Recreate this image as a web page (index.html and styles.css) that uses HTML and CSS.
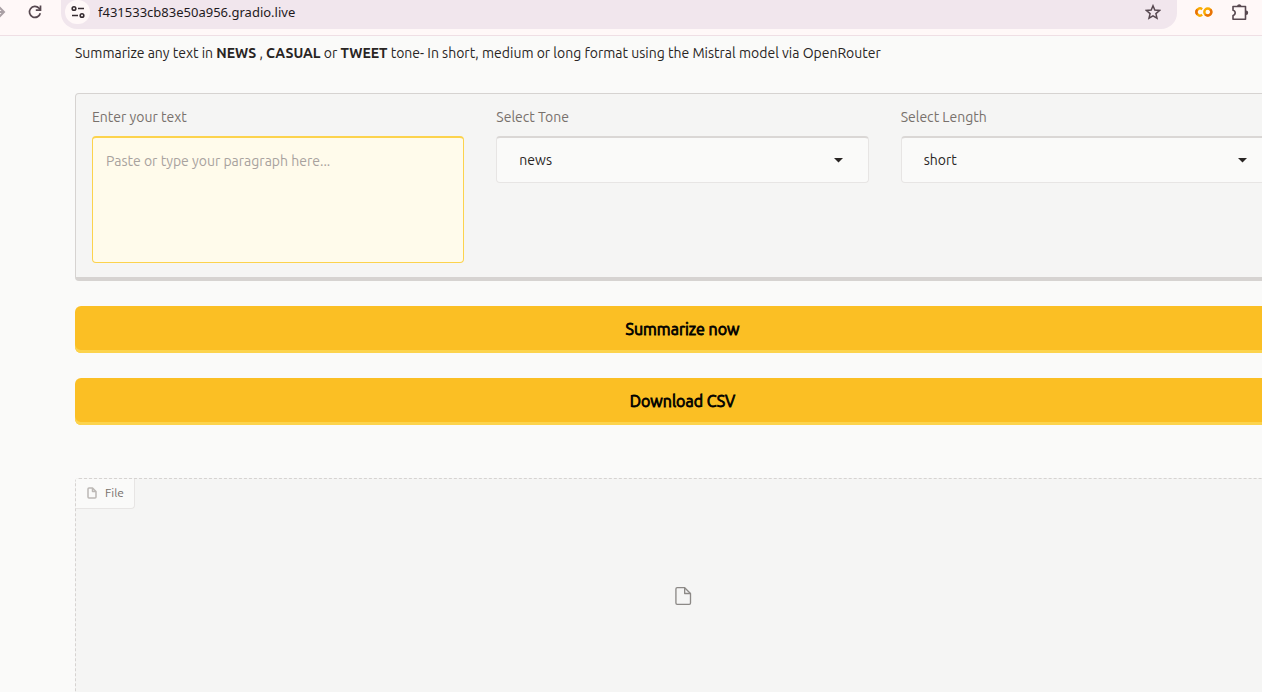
FILE: index.html
```html
<!DOCTYPE html>
<html lang="en">
<head>
<meta charset="utf-8">
<meta name="viewport" content="width=device-width, initial-scale=1">
<title>Text summarizer</title>
<link rel="stylesheet" href="styles.css">
</head>
<body>
<header class="toolbar">
  <button class="nav-button forward" aria-label="Forward">
    <svg width="16" height="16" viewBox="0 0 16 16" fill="none" stroke="currentColor" stroke-width="2"><path d="M1 8h13M8.500 2.500 14 8l-5.500 5.500"/></svg>
  </button>
  <button class="nav-button" aria-label="Reload">
    <svg width="16" height="16" viewBox="0 0 16 16" fill="none" stroke="currentColor" stroke-width="1.700"><path d="M13.300 9.200A5.500 5.500 0 1 1 12 4.200L13.500 5.700"/><path d="M13.500 1.500v4.700H8.800"/></svg>
  </button>
  <div class="address">
    <button class="site-info" aria-label="Site information">
      <svg width="14" height="14" viewBox="0 0 14 14" fill="none" stroke="currentColor" stroke-width="1.600"><circle cx="3" cy="3.500" r="1.800"/><path d="M7 3.500h6M1 10.500h6"/><circle cx="11" cy="10.500" r="1.800"/></svg>
    </button>
    <input class="url" type="text" aria-label="Address" value="f431533cb83e50a956.gradio.live">
    <button class="nav-button" aria-label="Bookmark">
      <svg width="16" height="16" viewBox="0 0 16 16" fill="none" stroke="currentColor" stroke-width="1.500"><path d="m8 1.800 1.800 4.300 4.700.400-3.600 3.100 1.100 4.600L8 11.800l-4 2.400 1.100-4.600L1.500 6.500l4.700-.400z"/></svg>
    </button>
  </div>
  <button class="nav-button" aria-label="Colab">
    <svg width="18" height="12" viewBox="0 0 18 12" fill="none" stroke-width="2.400"><path stroke="#f9ab00" d="M7.200 8.800A3.500 3.500 0 1 1 7.200 3.200"/><circle cx="12.800" cy="6" r="3.500" stroke="#f9ab00"/><path stroke="#e8710a" d="M15.300 3.500A3.500 3.500 0 0 1 10.300 8.500M2.300 8.500A3.500 3.500 0 0 1 2.300 3.500"/></svg>
  </button>
  <button class="nav-button" aria-label="Extensions">
    <svg width="18" height="18" viewBox="0 0 18 18" fill="none" stroke="currentColor" stroke-width="1.600" stroke-linejoin="round"><path d="M2 3.500h12.500v12.700H2v-3.700a2.700 2.700 0 0 0 0-5.300z"/><path fill="currentColor" stroke="none" d="M6 3a2.300 2.300 0 0 1 4.500 0zM15 7.500a2.200 2.200 0 0 1 0 4.400z"/></svg>
  </button>
</header>

<main class="app">
  <p class="intro">Summarize any text in <strong>NEWS</strong> , <strong>CASUAL</strong> or <strong>TWEET</strong> tone- In short, medium or long format using the Mistral model via OpenRouter</p>

  <section class="panel">
    <label class="field">
      <span class="field-label">Enter your text</span>
      <textarea class="text-box" placeholder="Paste or type your paragraph here..."></textarea>
    </label>
    <label class="field">
      <span class="field-label">Select Tone</span>
      <span class="select-wrap">
        <select class="select"><option>news</option><option>casual</option><option>tweet</option></select>
        <svg class="caret" width="18" height="18" viewBox="0 0 18 18"><path fill="currentColor" d="M5 7h9l-4.500 4.500z"/></svg>
      </span>
    </label>
    <label class="field">
      <span class="field-label">Select Length</span>
      <span class="select-wrap">
        <select class="select"><option>short</option><option>medium</option><option>long</option></select>
        <svg class="caret" width="18" height="18" viewBox="0 0 18 18"><path fill="currentColor" d="M5 7h9l-4.500 4.500z"/></svg>
      </span>
    </label>
  </section>

  <button class="action">Summarize now</button>
  <button class="action">Download CSV</button>

  <section class="file-block">
    <div class="file-label">
      <svg width="12" height="12" viewBox="0 0 24 24" fill="none" stroke="currentColor" stroke-width="3" stroke-linejoin="round"><path d="M13 2H6a2 2 0 0 0-2 2v16a2 2 0 0 0 2 2h12a2 2 0 0 0 2-2V9z"/><path d="M13 2v7h7"/></svg>
      File
    </div>
    <div class="file-empty">
      <svg width="20" height="20" viewBox="0 0 24 24" fill="none" stroke="currentColor" stroke-width="1.600" stroke-linejoin="round"><path d="M14 2H5a1.500 1.500 0 0 0-1.500 1.500v17A1.500 1.500 0 0 0 5 22h14.500a1.500 1.500 0 0 0 1.500-1.500V9z"/><path d="M14 2v7h7"/></svg>
    </div>
  </section>
</main>
</body>
</html>
```
FILE: styles.css
```css
* {
  box-sizing: border-box;
}

body {
  margin: 0;
  min-height: 100vh;
  display: flex;
  flex-direction: column;
  overflow-x: hidden;
  background: #fafaf9;
  color: #292524;
  font: 14px/20px Ubuntu, "Noto Sans", sans-serif;
}

button,
input,
select,
textarea {
  font: inherit;
  color: inherit;
}

svg {
  display: block;
}

.toolbar {
  display: flex;
  align-items: flex-start;
  height: 36px;
  padding-right: 4px;
  background: #fff8f8;
  border-bottom: 1px solid #efdfe5;
  color: #574850;
}

.nav-button {
  display: flex;
  align-items: center;
  justify-content: center;
  flex: none;
  width: 36px;
  height: 24px;
  padding: 0;
  border: 0;
  background: none;
}

.forward {
  width: 16px;
  margin-left: -10px;
  margin-right: 11px;
  color: #aaa0a5;
}

.address {
  flex: 1;
  display: flex;
  align-items: flex-start;
  height: 29px;
  margin-left: 8px;
  margin-right: 9px;
  padding-left: 4px;
  padding-right: 6px;
  background: #f1e6ed;
  border-radius: 0 0 16px 16px;
}

.site-info {
  display: flex;
  align-items: center;
  justify-content: center;
  width: 25px;
  height: 24px;
  padding: 0;
  border: 0;
  border-radius: 12px;
  background: #fff8f8;
  color: #352b30;
}

.url {
  flex: 1;
  min-width: 0;
  height: 24px;
  padding: 0 8px;
  border: 0;
  outline: 0;
  background: none;
  color: #1f1a1d;
  font-family: "Noto Sans", "Open Sans", sans-serif;
  font-size: 13px;
}

.app {
  flex: 1;
  display: flex;
  flex-direction: column;
  margin-left: 75px;
  margin-right: -28px;
}

.intro {
  margin: 7px 0 30px;
}

.intro strong {
  font-weight: 600;
}

.panel {
  display: grid;
  grid-template-columns: repeat(3, 1fr);
  gap: 32px;
  padding: 13px 16px 14px;
  margin-bottom: 25px;
  background: #f5f5f4;
  border: 1px solid #d6d3d1;
  border-bottom-width: 4px;
  border-radius: 4px;
}

.field {
  display: flex;
  flex-direction: column;
  gap: 9px;
}

.field-label {
  color: #78716c;
}

.text-box {
  height: 127px;
  padding: 13px;
  border: 1px solid #fcd34d;
  border-top-width: 2px;
  border-radius: 4px;
  background: #fffbeb;
  outline: 0;
  resize: none;
}

.text-box::placeholder {
  color: #a8a29e;
}

.select-wrap {
  position: relative;
}

.select {
  appearance: none;
  width: 100%;
  height: 47px;
  padding: 0 22px;
  border: 1px solid #e7e5e4;
  border-top: 2px solid #dad7d5;
  border-radius: 4px;
  background: #fafaf9;
}

.caret {
  position: absolute;
  top: 15px;
  right: 22px;
  pointer-events: none;
}

.action {
  height: 47px;
  margin-bottom: 25px;
  padding: 0 0 2px;
  border: 0;
  border-radius: 6px;
  background: #fbbf24;
  box-shadow: inset 0 -3px 0 #fcd34d;
  color: #000;
  font-size: 16px;
  font-weight: 400;
  -webkit-text-stroke: 0.05em currentColor;
}

.file-block {
  flex: 1;
  position: relative;
  display: flex;
  min-height: 236px;
  margin-top: 28px;
  margin-bottom: -22px;
  background: #f5f5f4;
  border: 1px dashed #d6d3d1;
  border-radius: 4px;
}

.file-label {
  position: absolute;
  top: 0;
  left: 0;
  display: flex;
  align-items: center;
  gap: 7px;
  height: 30px;
  padding: 0 10px 2px;
  background: #fafaf9;
  border: 1px solid #e7e5e4;
  border-width: 0 1px 1px 0;
  border-radius: 0 0 4px 0;
  color: #78716c;
  font-size: 12px;
}

.file-label svg {
  color: #bcb8b5;
}

.file-empty {
  margin: auto;
  color: #8c8986;
}
```
